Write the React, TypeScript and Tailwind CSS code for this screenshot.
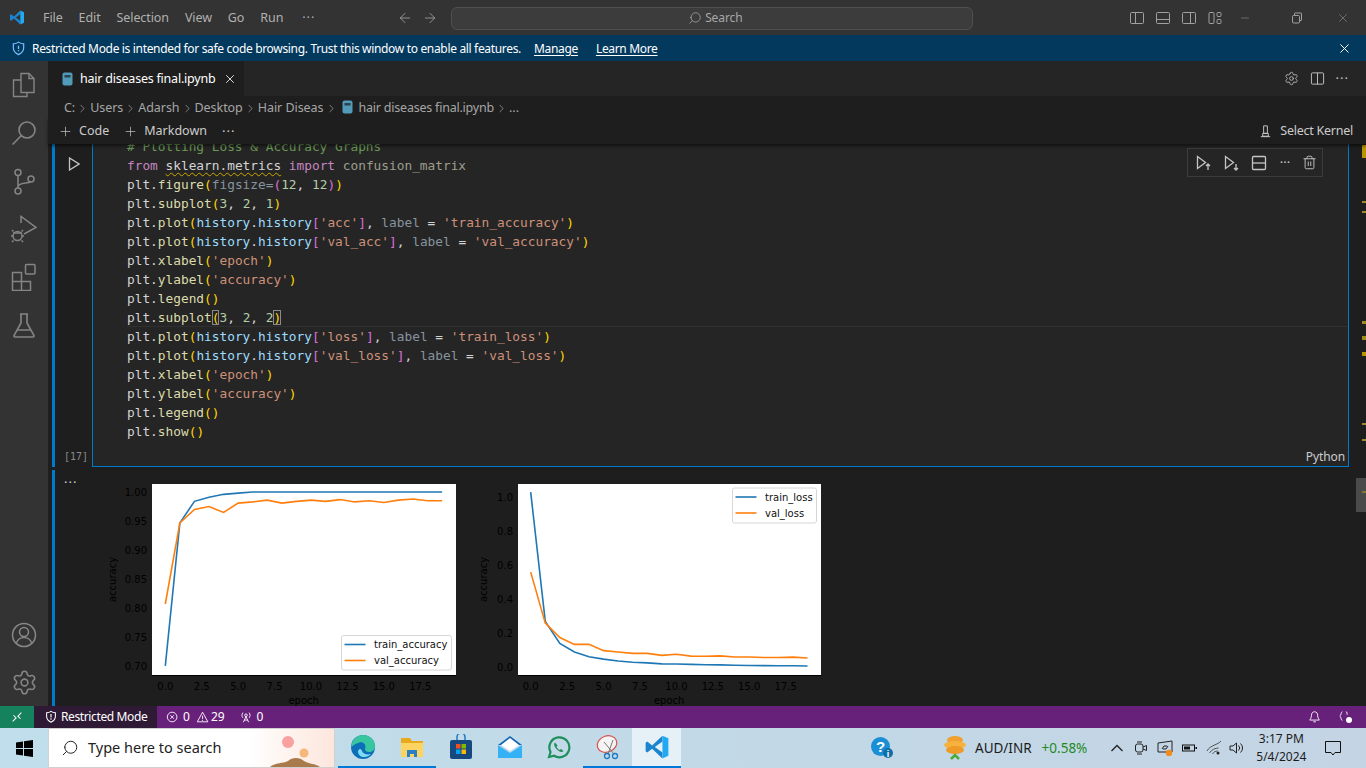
import { Settings, Trash2, Minus, Plus, ChevronRight, X, Search, ArrowLeft, ArrowRight } from 'lucide-react'
import type { ReactNode } from 'react'

const ui = "font-['Noto_Sans','Liberation_Sans',sans-serif]"

type Token = [string, string]

const P = 'text-[#d4d4d4]'
const F = 'text-[#dcdcaa]'
const V = 'text-[#9cdcfe]'
const S = 'text-[#ce9178]'
const G = 'text-[#87949e]'
const Y = 'text-[#ffd700]'
const M = 'text-[#da70d6]'
const N = 'text-[#b5cea8]'
const K = 'text-[#c586c0]'
const D = 'text-[#9d9d8c]'
const C = 'text-[#6a9955]'

function plotLine(key: string, label: string): Token[] {
  return [
    ['plt.', P], ['plot', F], ['(', Y], ['history', V], ['.', P], ['history', V], ['[', M],
    [`'${key}'`, S], [']', M], [', ', P], ['label', G], [' = ', P], [`'${label}'`, S], [')', Y],
  ]
}

function callLine(fn: string, arg?: string): Token[] {
  return [['plt.', P], [fn, F], ['(', Y], ...(arg ? ([[`'${arg}'`, S]] as Token[]) : []), [')', Y]]
}

const codeLines: Token[][] = [
  [['# Plotting Loss & Accuracy Graphs', C]],
  [['from', K], [' ', P], ['sklearn.metrics', 'text-[#d4d4d4] underline decoration-wavy decoration-[#cca700] decoration-1 underline-offset-2'], [' ', P], ['import', K], [' ', P], ['confusion_matrix', D]],
  [['plt.', P], ['figure', F], ['(', Y], ['figsize', G], ['=', G], ['(', M], ['12', N], [', ', P], ['12', N], [')', M], [')', Y]],
  [['plt.', P], ['subplot', F], ['(', Y], ['3', N], [', ', P], ['2', N], [', ', P], ['1', N], [')', Y]],
  plotLine('acc', 'train_accuracy'),
  plotLine('val_acc', 'val_accuracy'),
  callLine('xlabel', 'epoch'),
  callLine('ylabel', 'accuracy'),
  callLine('legend'),
  [['plt.', P], ['subplot', F], ['(', `${Y} outline outline-1 -outline-offset-1 outline-[#8a8a8a]`], ['3', N], [', ', P], ['2', N], [', ', P], ['2', N], [')', `${Y} outline outline-1 -outline-offset-1 outline-[#8a8a8a]`]],
  plotLine('loss', 'train_loss'),
  plotLine('val_loss', 'val_loss'),
  callLine('xlabel', 'epoch'),
  callLine('ylabel', 'accuracy'),
  callLine('legend'),
  callLine('show'),
]

function Ico({ size = 16, children, className = '', box = 16 }: { size?: number; children: ReactNode; className?: string; box?: number }) {
  return (
    <svg width={size} height={size} viewBox={`0 0 ${box} ${box}`} fill="none" stroke="currentColor" className={className}>
      {children}
    </svg>
  )
}

function VsLogo({ size = 20 }: { size?: number }) {
  return (
    <svg width={size} height={size} viewBox="0 0 24 24">
      <path fill="#1b84cf" d="M17 1.5 7.5 10.5 3 7 1.5 8v8L3 17l4.500-3.500L17 22.500V17l-7-5 7-5z" />
      <path fill="#23a9f2" d="M17 1.500 22.500 4v16L17 22.500z" />
    </svg>
  )
}

function NotebookIcon() {
  return (
    <svg width="11" height="14" viewBox="0 0 11 14">
      <rect x="0.5" y="0.5" width="10" height="13" rx="2" fill="#519aba" />
      <rect x="2.5" y="3" width="6" height="2.5" fill="#1e1e1e" opacity="0.7" />
    </svg>
  )
}

function TitleBar() {
  const menu: [string, string][] = [
    ['File', 'ml-[18px]'],
    ['Edit', 'ml-[16px]'],
    ['Selection', 'ml-[16px]'],
    ['View', 'ml-[16px]'],
    ['Go', 'ml-[16px]'],
    ['Run', 'ml-[16px]'],
    ['···', 'ml-[19px] tracking-[1px]'],
  ]
  return (
    <header className="flex h-[35px] shrink-0 items-center bg-[#333333] text-[12.5px] tracking-[-0.1px] text-[#b0b0b0]">
      <div className="ml-[9px] flex w-[16px] justify-center"><VsLogo size={19} /></div>
      {menu.map(([label, gap]) => (
        <span key={label} className={`pt-[2px] ${gap}`}>{label}</span>
      ))}
      <ArrowLeft size={16} strokeWidth={1.2} className="ml-[82px] mt-[1px] text-[#a8a8a8]" />
      <ArrowRight size={16} strokeWidth={1.2} className="ml-[9px] mt-[1px] text-[#a8a8a8]" />
      <div className="ml-[13px] mt-[1px] flex h-[23px] w-[522px] items-center justify-center gap-[3px] rounded-[6px] border border-[#4f4f4f] bg-[#3c3c3c] pl-[6px] text-[#a8a8a8]">
        <Search size={14} strokeWidth={1.3} className="-scale-x-100" />
        <span className="text-[12px]">Search</span>
      </div>
      <div className="ml-[156px] mt-[1px] flex items-center gap-[10px] text-[#a0a0a0]">
        <Ico><rect x="1.5" y="2.5" width="13" height="11" rx="1" /><path d="M6.5 2.5v11" /></Ico>
        <Ico><rect x="1.5" y="2.5" width="13" height="11" rx="1" /><path d="M1.5 9.5h13" /></Ico>
        <Ico><rect x="1.5" y="2.5" width="13" height="11" rx="1" /><path d="M9.5 2.5v11" /></Ico>
        <Ico><rect x="2" y="2.5" width="5" height="11" rx="1" /><rect x="10" y="2.5" width="4" height="4" rx="1" /><rect x="10" y="9.5" width="4" height="4" rx="1" /></Ico>
      </div>
      <Minus size={12} strokeWidth={1} className="ml-[16px] text-[#a0a0a0]" />
      <Ico size={12} box={12} className="ml-[40px] text-[#a0a0a0]"><rect x="1.5" y="3.5" width="7" height="7.5" rx="1" /><path d="M3.5 3V1.5a.5.5 0 0 1 .5-.5h6a.5.5 0 0 1 .5.5V8a.5.5 0 0 1-.5.5H9" /></Ico>
      <X size={14} strokeWidth={0.9} className="ml-[33px] text-[#a0a0a0]" />
    </header>
  )
}

function Banner() {
  return (
    <div className="flex h-[26px] shrink-0 items-center bg-[#04395e] pl-[11px] pr-[14px] text-[12px] tracking-[-0.33px] text-white">
      <Ico size={15}>
        <path stroke="#75beff" strokeWidth="1.3" d="M8 1.2c1.6 1.2 3.4 1.8 5.5 1.9v4.4c0 3-2.1 5.4-5.5 7-3.4-1.600-5.500-4-5.500-7V3.100C4.600 3 6.400 2.400 8 1.200z" />
        <path stroke="#75beff" strokeWidth="1.4" d="M8 5v3.4M8 9.500v1.400" />
      </Ico>
      <span className="ml-[6px] w-[488px] whitespace-nowrap pt-[1px]">Restricted Mode is intended for safe code browsing. Trust this window to enable all features.</span>
      <span className="ml-[14px] pt-[1px] underline underline-offset-2">Manage</span>
      <span className="ml-[18px] pt-[1px] underline underline-offset-2">Learn More</span>
      <X size={15} strokeWidth={1.6} className="ml-auto" />
    </div>
  )
}

function ActivityBar() {
  return (
    <aside className="flex w-[48px] shrink-0 flex-col items-center bg-[#333333] text-[#858585]">
      <div className="mt-[10px] flex flex-col items-center gap-[20px]">
        <Ico size={28} box={28} className="stroke-[1.4]">
          <path d="M11 2.500h8l5 5v14H11z" /><path d="M19 2.500v5h5" /><path d="M11 9H3.500v16.500H17V21.500" />
        </Ico>
        <Ico size={28} box={28} className="stroke-[1.6]">
          <circle cx="17" cy="11" r="8" /><path d="M11.200 16.800 2.500 25.500" />
        </Ico>
        <Ico size={28} box={28} className="stroke-[1.5]">
          <circle cx="8" cy="5.500" r="3" /><circle cx="8" cy="24" r="3" /><circle cx="21" cy="12" r="3" />
          <path d="M8 8.500V21M8 20c0-5 11-3 12.500-5.500" />
        </Ico>
        <Ico size={28} box={28} className="stroke-[1.5]">
          <path d="M11 8V1.500L26 12.500 14 19" /><circle cx="7.500" cy="21" r="4.500" />
          <path d="M3 21H1M14 21h-2M3.500 16.500 2 15M11.500 16.500 13 15M3.500 25.500 2 27M11.500 25.500 13 27M3 18h9" />
        </Ico>
        <Ico size={28} box={28} className="stroke-[1.5]">
          <path d="M2.500 9.500h9v9h9v9h-18zM2.500 18.500h9v9M11.500 18.500" /><rect x="15.500" y="1.500" width="9.500" height="9.500" rx="1" />
        </Ico>
        <Ico size={28} box={28} className="stroke-[1.6]">
          <path d="M10 3h8M11 3v9L4 24.500c-.3.800.2 1.500 1 1.500h18c.8 0 1.300-.7 1-1.500L17 12V3M7.500 19h13" />
        </Ico>
      </div>
      <div className="mb-[10px] mt-auto flex flex-col items-center gap-[20px]">
        <Ico size={28} box={28} className="stroke-[1.6]">
          <circle cx="14" cy="14" r="11.500" /><circle cx="14" cy="11" r="4.500" /><path d="M6 22.500c1.500-4 4.500-6 8-6s6.500 2 8 6" />
        </Ico>
        <Settings size={27} strokeWidth={1.4} />
      </div>
    </aside>
  )
}

function TabBar() {
  return (
    <div className="flex h-[35px] shrink-0 items-center bg-[#252526] text-[12.5px]">
      <div className="flex h-full w-[196px] items-center bg-[#1e1e1e] pl-[14px] text-white">
        <NotebookIcon />
        <span className="ml-[7px] whitespace-nowrap pt-[2px] tracking-[-0.22px]">hair diseases final.ipynb</span>
        <X size={14} strokeWidth={1.4} className="ml-[8px]" />
      </div>
      <div className="ml-auto mr-[17px] flex items-center gap-[11px] text-[#c5c5c5]">
        <Settings size={15} strokeWidth={1.3} />
        <Ico size={15}><rect x="1.500" y="2" width="13" height="12" rx="1" /><path d="M8 2v12" /></Ico>
        <span className="text-[13px] leading-none tracking-[1px]">···</span>
      </div>
    </div>
  )
}

function Breadcrumbs() {
  const crumbs = ['C:', 'Users', 'Adarsh', 'Desktop', 'Hair Diseas']
  return (
    <div className="flex h-[22px] shrink-0 items-center bg-[#1e1e1e] pl-[16px] text-[12.5px] text-[#a6a6a6]">
      {crumbs.map((crumb) => (
        <span key={crumb} className="flex items-center pt-[2px] tracking-[-0.05px]">
          {crumb}
          <ChevronRight size={13} strokeWidth={1.3} className="mx-[1px]" />
        </span>
      ))}
      <span className="ml-[3px]"><NotebookIcon /></span>
      <span className="ml-[6px] pt-[2px] tracking-[-0.22px]">hair diseases final.ipynb</span>
      <ChevronRight size={13} strokeWidth={1.3} className="mx-[1px] mt-[2px]" />
      <span className="pt-[2px]">...</span>
    </div>
  )
}

function NotebookToolbar() {
  return (
    <div className="z-10 flex h-[26px] shrink-0 items-center bg-[#1e1e1e] pl-[10px] pr-[13px] text-[12.5px] text-[#cccccc] shadow-[0_2px_3px_rgba(0,0,0,0.55)]">
      <Plus size={15} strokeWidth={1.1} />
      <span className="ml-[6px]">Code</span>
      <Plus size={15} strokeWidth={1.1} className="ml-[14px]" />
      <span className="ml-[6px]">Markdown</span>
      <span className="ml-[15px] text-[13px] leading-none tracking-[1px]">···</span>
      <Ico size={15} className="ml-auto">
        <path d="M6 2h4v8H6zM5 10h6v3H5zM3 13.500h10" />
      </Ico>
      <span className="ml-[7px] tracking-[-0.25px]">Select Kernel</span>
    </div>
  )
}

function CellToolbar() {
  return (
    <div className="absolute right-[25px] top-[4px] flex h-[29px] w-[136px] items-center gap-[10px] border border-[#3c3c3c] bg-[#252526] pl-[6px] text-[#c5c5c5]">
      <Ico size={18} box={18} className="stroke-[1.3]"><path d="M3.500 2.500v12l8-6z" /><path d="M14 16v-6M12 12l2-2 2 2" /></Ico>
      <Ico size={18} box={18} className="stroke-[1.3]"><path d="M3.500 2.500v12l8-6z" /><path d="M14 10v6M12 14l2 2 2-2" /></Ico>
      <Ico size={18} box={18} className="stroke-[1.3]"><rect x="2.500" y="2.500" width="13" height="13" rx="1" /><path d="M2.500 9h13" /></Ico>
      <span className="w-[14px] text-center text-[13px] leading-none">···</span>
      <Trash2 size={15} strokeWidth={1.5} />
    </div>
  )
}

function CodeCell() {
  return (
    <section className="flex h-[323px] shrink-0 pl-[4px]">
      <div className="w-[3px] bg-[#007acc]" />
      <div className="relative flex w-[38px] shrink-0 flex-col">
        <svg width="12" height="14" viewBox="0 0 12 14" fill="none" stroke="#c5c5c5" strokeWidth="1.300" className="ml-[13px] mt-[13px]">
          <path d="M1.500 1v12l9.500-6z" />
        </svg>
        <span className="mb-[3px] ml-[9px] mt-auto font-['DejaVu_Sans_Mono',monospace] text-[10px] text-[#8a8a8a]">[17]</span>
      </div>
      <div className="relative -ml-px mr-[17px] flex-1 overflow-hidden border-x border-b border-[#007acc] bg-[#252526] pl-[34px]">
        <div className="-mt-[7px] font-['DejaVu_Sans_Mono',monospace] text-[12.800px] leading-[19px]">
          {codeLines.map((line, index) => (
            <div
              key={index}
              className={index === 9 ? 'h-[19px] whitespace-pre shadow-[inset_0_-1px_0_#303031]' : 'h-[19px] whitespace-pre'}
            >
              {line.map(([text, color], tokenIndex) => (
                <span key={tokenIndex} className={color}>{text}</span>
              ))}
            </div>
          ))}
        </div>
        <CellToolbar />
        <span className="absolute bottom-[3px] right-[3px] text-[12px] leading-none tracking-[-0.1px] text-[#cccccc]">Python</span>
      </div>
    </section>
  )
}

type Series = { color: string; values: number[] }

function LineChart({
  viewBox,
  x0,
  plot,
  xs,
  yTicks,
  yToPx,
  series,
  legend,
  yLabelX,
  tickRight,
}: {
  viewBox: string
  x0: number
  plot: { x: number; w: number }
  xs: number
  yTicks: [string, number][]
  yToPx: (v: number) => number
  series: Series[]
  legend: { x: number; y: number; w: number; h: number; labels: string[] }
  yLabelX: number
  tickRight: number
}) {
  const xTicks = ['0.0', '2.5', '5.0', '7.5', '10.0', '12.5', '15.0', '17.5']
  const vb = viewBox.split(' ').map(Number)
  return (
    <svg width={vb[2]} height={vb[3]} viewBox={viewBox} className="shrink-0 font-['DejaVu_Sans',sans-serif]">
      <rect x={plot.x} y={484} width={plot.w} height={191} fill="#ffffff" />
      <path d={`M${plot.x} 675.5H${plot.x + plot.w}`} stroke="#000" strokeWidth="1" />
      {series.map((s) => (
        <polyline
          key={s.color}
          fill="none"
          stroke={s.color}
          strokeWidth="1.6"
          points={s.values.map((v, i) => `${x0 + i * xs},${yToPx(v)}`).join(' ')}
        />
      ))}
      {xTicks.map((t, i) => (
        <text key={t} x={x0 + i * 2.5 * xs} y={690} fontSize="10" textAnchor="middle" fill="#000000">{t}</text>
      ))}
      {yTicks.map(([t, v]) => (
        <text key={t} x={tickRight} y={yToPx(v) + 3.5} fontSize="10" textAnchor="end" fill="#000000">{t}</text>
      ))}
      <text x={x0 + 9.5 * xs} y={703.5} fontSize="10" textAnchor="middle" fill="#000000">epoch</text>
      <text transform={`translate(${yLabelX} 579.5) rotate(-90)`} fontSize="10" textAnchor="middle" fill="#000000">accuracy</text>
      <rect x={legend.x} y={legend.y} width={legend.w} height={legend.h} rx="2" fill="#ffffff" stroke="#cccccc" strokeWidth="0.8" />
      {legend.labels.map((label, i) => (
        <g key={label}>
          <path d={`M${legend.x + 3} ${legend.y + 9 + i * 16}h21`} stroke={series[i].color} strokeWidth="1.6" />
          <text x={legend.x + 32.5} y={legend.y + 12.5 + i * 16} fontSize="10" fill="#111111">{label}</text>
        </g>
      ))}
    </svg>
  )
}

function OutputCell() {
  const accTrain = [0.702, 0.947, 0.984, 0.991, 0.996, 0.998, 1, 1, 1, 1, 1, 1, 1, 1, 1, 1, 1, 1, 1, 1]
  const accVal = [0.808, 0.947, 0.97, 0.975, 0.965, 0.981, 0.983, 0.986, 0.981, 0.984, 0.986, 0.984, 0.987, 0.983, 0.985, 0.982, 0.986, 0.988, 0.985, 0.985]
  const lossTrain = [1.03, 0.27, 0.14, 0.09, 0.062, 0.048, 0.037, 0.03, 0.026, 0.02, 0.019, 0.017, 0.015, 0.014, 0.012, 0.011, 0.01, 0.009, 0.009, 0.008]
  const lossVal = [0.56, 0.26, 0.175, 0.135, 0.135, 0.098, 0.09, 0.082, 0.082, 0.07, 0.077, 0.066, 0.065, 0.067, 0.061, 0.061, 0.058, 0.058, 0.06, 0.055]
  return (
    <section className="mt-[3px] flex min-h-0 flex-1 pl-[4px]">
      <div className="w-[3px] shrink-0 bg-[#007acc]" />
      <div className="w-[45px] shrink-0 pl-[9px] pt-[6px] text-[13px] leading-none tracking-[1px] text-[#cccccc]">···</div>
      <div className="flex pt-[8px]">
        <LineChart
          viewBox="100 478 370 228"
          x0={165.3}
          plot={{ x: 152, w: 304 }}
          xs={14.57}
          yTicks={[['1.00', 1], ['0.95', 0.95], ['0.90', 0.9], ['0.85', 0.85], ['0.80', 0.8], ['0.75', 0.75], ['0.70', 0.7]]}
          yToPx={(v) => 492 + (1 - v) * 583.3}
          series={[{ color: '#1f77b4', values: accTrain }, { color: '#ff7f0e', values: accVal }]}
          legend={{ x: 341.5, y: 635.5, w: 110, h: 34.5, labels: ['train_accuracy', 'val_accuracy'] }}
          yLabelX={116}
          tickRight={147}
        />
        <LineChart
          viewBox="470 478 370 228"
          x0={530.7}
          plot={{ x: 518, w: 303 }}
          xs={14.57}
          yTicks={[['1.0', 1], ['0.8', 0.8], ['0.6', 0.6], ['0.4', 0.4], ['0.2', 0.2], ['0.0', 0]]}
          yToPx={(v) => 667.3 - v * 170}
          series={[{ color: '#1f77b4', values: lossTrain }, { color: '#ff7f0e', values: lossVal }]}
          legend={{ x: 732.5, y: 488, w: 84, h: 35, labels: ['train_loss', 'val_loss'] }}
          yLabelX={487}
          tickRight={513}
        />
      </div>
    </section>
  )
}

function OverviewRuler() {
  return (
    <div className="absolute right-0 top-0 h-full w-[10px]">
      <div className="absolute right-0 top-[334px] h-[34px] w-[10px] bg-[#4a4a4a]" />
      <div className="absolute right-0 top-[1px] h-[13px] w-[4px] bg-[#b89500]" />
      <div className="absolute right-0 top-[57px] h-[2px] w-[4px] bg-[#a08a20]" />
      <div className="absolute right-0 top-[67px] h-[2px] w-[4px] bg-[#a08a20]" />
      <div className="absolute right-0 top-[177px] h-[3px] w-[4px] bg-[#a08a20]" />
      <div className="absolute right-0 top-[192px] h-[4px] w-[4px] bg-[#a08a20]" />
      <div className="absolute right-0 top-[208px] h-[4px] w-[4px] bg-[#b89500]" />
      <div className="absolute right-0 top-[279px] h-[2px] w-[4px] bg-[#a08a20]" />
      <div className="absolute right-0 top-[295px] h-[2px] w-[4px] bg-[#a08a20]" />
      <div className="absolute right-0 top-[347px] h-[2px] w-[4px] bg-[#8a7a30]" />
    </div>
  )
}

function StatusBar() {
  return (
    <footer className="flex h-[22px] shrink-0 items-center bg-[#68217a] text-[12px] text-white">
      <div className="flex h-full w-[34px] items-center justify-center bg-[#16825d]">
        <Ico size={14}><path d="m3 13 4-4-3-3M13 3 9 7l3 3" strokeWidth="1.2" /></Ico>
      </div>
      <div className="flex h-full w-[123px] items-center gap-[3px] bg-[#2f1a36] pl-[10px]">
        <Ico size={14}><path d="M8 1.500c1.500 1 3 1.500 5 1.700v4.300c0 3-2 5-5 6.500-3-1.500-5-3.500-5-6.500V3.200c2-.2 3.500-.7 5-1.700z" strokeWidth="1.2" /><path d="M8 4.500v4M8 9.500v1.500" strokeWidth="1.3" /></Ico>
        <span className="tracking-[-0.38px]">Restricted Mode</span>
      </div>
      <Ico size={14} className="ml-[9px]"><circle cx="7" cy="8" r="5.5" /><path d="m5 6 4 4M9 6l-4 4" /></Ico>
      <span className="ml-[3px]">0</span>
      <Ico size={14} className="ml-[6px]"><path d="M7.500 2.500 1.500 13.500h12zM7.500 6.500v4M7.500 11.500v1" /></Ico>
      <span className="ml-[1px]">29</span>
      <Ico size={14} className="ml-[14px]"><circle cx="8" cy="6" r="1.5" /><path d="M8 7.500 5 14M8 7.500l3 6.500M6 11.500h4M4.500 9C3 7 3 5 4.500 3M11.500 9c1.500-2 1.500-4 0-6" /></Ico>
      <span className="ml-[4px]">0</span>
      <Ico size={14} className="ml-auto"><path d="M7.500 2c-2.500 0-3.500 2-3.500 4 0 3-1.500 4.500-2 5.500h11c-.5-1-2-2.500-2-5.500 0-2-1-4-3.500-4zM6 13.500h3" /></Ico>
      <div className="relative ml-[16px] mr-[14px] h-[14px] w-[14px]">
        <Ico size={14}><path d="M5 2C3 2 4 6.500 2 7c2 .5 1 5 3 5M9 2c2 0 1 2.500 1.500 3.500" /></Ico>
        <span className="absolute bottom-[1px] right-0 h-[6px] w-[6px] rounded-full bg-white" />
      </div>
    </footer>
  )
}

function TaskIcon({ children, state }: { children: ReactNode; state?: 'open' | 'active' }) {
  const cls =
    state === 'active'
      ? 'flex h-full w-[49px] items-center justify-center border-b-[2px] border-[#0078d7] bg-[#e6f1f7]'
      : state === 'open'
        ? 'flex h-full w-[49px] items-center justify-center border-b-[2px] border-[#0078d7]'
        : 'flex h-full w-[49px] items-center justify-center border-b-[2px] border-transparent'
  return <div className={cls}>{children}</div>
}

function Taskbar() {
  return (
    <div className="flex h-[40px] shrink-0 items-center bg-gradient-to-r from-[#c0deeb] to-[#c4d4e4] text-[#111111]">
      <div className="flex w-[48px] shrink-0 justify-center">
        <svg width="17" height="17" viewBox="0 0 17 17" fill="#000">
          <path d="M0 2.400 7 1.400V8H0zM8 1.300 17 0v8H8zM0 9h7v6.600L0 14.600zM8 9h9v8l-9-1.300z" />
        </svg>
      </div>
      <div className="relative flex h-full w-[287px] shrink-0 items-center overflow-hidden border border-[#d0d0d0] bg-gradient-to-r from-white from-70% to-[#fde6dc] pl-[12px]">
        <Search size={18} strokeWidth={1.3} className="-scale-x-100 text-[#222]" />
        <span className="ml-[9px] text-[14.5px] text-[#222222]">Type here to search</span>
        <svg width="90" height="38" viewBox="0 0 90 38" className="absolute right-0 top-0">
          <circle cx="44" cy="13" r="6" fill="#f9a1a1" />
          <circle cx="60" cy="24" r="4.5" fill="#f5b87a" />
          <path d="M26 38c6-5 12-3 18-6 4-4 12-4 16 0 4 3 10 2 16 6z" fill="#a87a4c" />
        </svg>
      </div>
      <div className="ml-[3px] flex h-full">
        <TaskIcon state="open">
          <svg width="26" height="26" viewBox="0 0 26 26">
            <circle cx="13" cy="13" r="12" fill="#0c6fb8" />
            <path d="M1 13C2 5 8 1 13 1c7 0 12 5 12 11 0 4-3 6-6 6-2 0-4-1-4-3 2-5-3-8-7-6-4 1-6 4-7 4z" fill="#37c6a0" />
            <path d="M8 17c0 4 3 6 6 6 3 0 5-1 7-3-4 1-8 0-9-3-1-2-2-3-4 0z" fill="#7fdcf5" />
          </svg>
        </TaskIcon>
        <TaskIcon state="open">
          <svg width="24" height="22" viewBox="0 0 24 22">
            <path d="M1 2h9l2 3h11v4H1z" fill="#e8a91c" />
            <path d="M1 7h22v14H1z" fill="#fcd462" />
            <path d="M7 21v-7h10v7h-3v-3h-4v3z" fill="#2a7fc6" />
          </svg>
        </TaskIcon>
        <TaskIcon>
          <svg width="24" height="26" viewBox="0 0 24 26">
            <path d="M8 6V3a4 4 0 0 1 8 0v3" fill="none" stroke="#1f79c4" strokeWidth="1.5" />
            <rect x="1" y="6" width="22" height="19" rx="2" fill="#17487e" />
            <rect x="7" y="10" width="4.5" height="4.5" fill="#f25022" />
            <rect x="12.5" y="10" width="4.5" height="4.5" fill="#7fba00" />
            <rect x="7" y="15.5" width="4.5" height="4.5" fill="#00a4ef" />
            <rect x="12.5" y="15.5" width="4.5" height="4.5" fill="#ffb900" />
          </svg>
        </TaskIcon>
        <TaskIcon>
          <svg width="24" height="24" viewBox="0 0 24 24">
            <path d="M12 1 0 10h24z" fill="#1065b0" />
            <path d="M3 10 12 3l9 7-9 6z" fill="#fff" />
            <path d="M0 10l12 8 12-8v13H0z" fill="#35b1f5" />
          </svg>
        </TaskIcon>
        <TaskIcon>
          <svg width="25" height="25" viewBox="0 0 25 25" fill="none">
            <path d="M3 22l1.500-5A10 10 0 1 1 8 20.800z" stroke="#1f8f5c" strokeWidth="2.2" />
            <path d="M9 7.500c-2 2 0 5 2 7s5 3.500 6.500 1.500l-2.500-2-1.500 1c-1-.5-2.500-2-3-3l1-1.500z" fill="#1f8f5c" />
          </svg>
        </TaskIcon>
        <TaskIcon state="open">
          <svg width="26" height="26" viewBox="0 0 26 26" fill="none">
            <ellipse cx="12" cy="10" rx="10" ry="8" stroke="#d9534f" strokeWidth="1.2" fill="#f4f4f4" transform="rotate(-20 12 10)" />
            <path d="M9 8l10 12M18 6 13 20" stroke="#777" strokeWidth="1" />
            <circle cx="20" cy="22" r="2.5" stroke="#1b79c0" strokeWidth="1.3" />
            <circle cx="12" cy="22" r="2.5" stroke="#1b79c0" strokeWidth="1.3" />
          </svg>
        </TaskIcon>
        <TaskIcon state="active">
          <VsLogo size={26} />
        </TaskIcon>
      </div>
      <div className="ml-[189px] flex h-full items-center">
        <svg width="24" height="24" viewBox="0 0 24 24">
          <circle cx="10.5" cy="10.5" r="9.5" fill="#1a8fd6" />
          <text x="10.5" y="16" fontSize="15" fontWeight="700" textAnchor="middle" fill="#fff" fontFamily="'Liberation Sans',sans-serif">?</text>
          <circle cx="18" cy="17" r="5" fill="#136ea8" />
          <text x="18" y="20.5" fontSize="9" fontWeight="700" textAnchor="middle" fill="#fff" fontFamily="'Liberation Sans',sans-serif">i</text>
        </svg>
      </div>
      <svg width="24" height="26" viewBox="0 0 24 26" className="ml-[49px]">
        <ellipse cx="12" cy="5" rx="8" ry="4" fill="#f0a030" />
        <ellipse cx="12" cy="10" rx="11" ry="4" fill="#f7b23e" />
        <ellipse cx="12" cy="15" rx="9" ry="4" fill="#ee9a26" />
        <path d="m8 24 4-4 4 4" fill="none" stroke="#4caa3a" strokeWidth="2.5" />
      </svg>
      <span className="ml-[8px] text-[13.5px] text-[#1a1a1a]">AUD/INR</span>
      <span className="ml-[10px] text-[13.5px] text-[#1f8a1f]">+0.58%</span>
      <div className="ml-[22px] flex items-center gap-[8px] text-[#222222]">
        <Ico size={16}><path d="m2.500 11 5.500-5.500 5.500 5.500" strokeWidth="1.3" /></Ico>
        <Ico size={16}><rect x="2.500" y="4" width="7.500" height="8" rx="2" /><path d="m10 7 3.500-1.500v5L10 9M4 2h5M4 14h5" /></Ico>
        <svg width="16" height="16" viewBox="0 0 16 16" fill="none" stroke="#222">
          <path d="M1 3 15 1v11H1zM5 9l2-3h3M11 6 9 9H6" />
          <circle cx="12" cy="13" r="3.2" fill="#f28b18" stroke="none" />
        </svg>
        <svg width="16" height="16" viewBox="0 0 16 16" fill="#111">
          <path d="M1 4.500h13v7H1zM2 5.500v5h11v-5zM3 6.500h6v3H3zM14.500 7H16v2h-1.500z" fillRule="evenodd" />
        </svg>
        <Ico size={18} box={18} className="text-[#555555]"><path d="M2 12C5 6 13 6 16 2M4.500 14c2-3.500 6-5 9-5M7.500 15c1-2 3-3 5-3" /><circle cx="13" cy="14" r="1.5" fill="#222" stroke="none" /></Ico>
        <Ico size={16} className="-ml-[3px]"><path d="M2 6h3l3.500-3v10L5 10H2zM10.500 5.500a3.500 3.500 0 0 1 0 5M12.500 3.500a6 6 0 0 1 0 9" /></Ico>
      </div>
      <div className="ml-[7px] flex w-[60px] flex-col items-center text-[12px] leading-[18px] text-[#1c1c1c]">
        <span>3:17 PM</span>
        <span>5/4/2024</span>
      </div>
      <svg width="16" height="16" viewBox="0 0 16 16" fill="none" stroke="#111" className="ml-[14px]">
        <path d="M.5 1.500h15v11H10L8 15l-2-2.500H.5z" />
      </svg>
    </div>
  )
}

export default function App() {
  return (
    <div className={`flex h-[768px] w-[1366px] flex-col overflow-hidden bg-[#1e1e1e] ${ui}`}>
      <TitleBar />
      <Banner />
      <div className="flex min-h-0 flex-1">
        <ActivityBar />
        <main className="flex min-w-0 flex-1 flex-col">
          <TabBar />
          <Breadcrumbs />
          <NotebookToolbar />
          <div className="relative flex min-h-0 flex-1 flex-col overflow-hidden">
            <CodeCell />
            <OutputCell />
            <OverviewRuler />
          </div>
        </main>
      </div>
      <StatusBar />
      <Taskbar />
    </div>
  )
}
